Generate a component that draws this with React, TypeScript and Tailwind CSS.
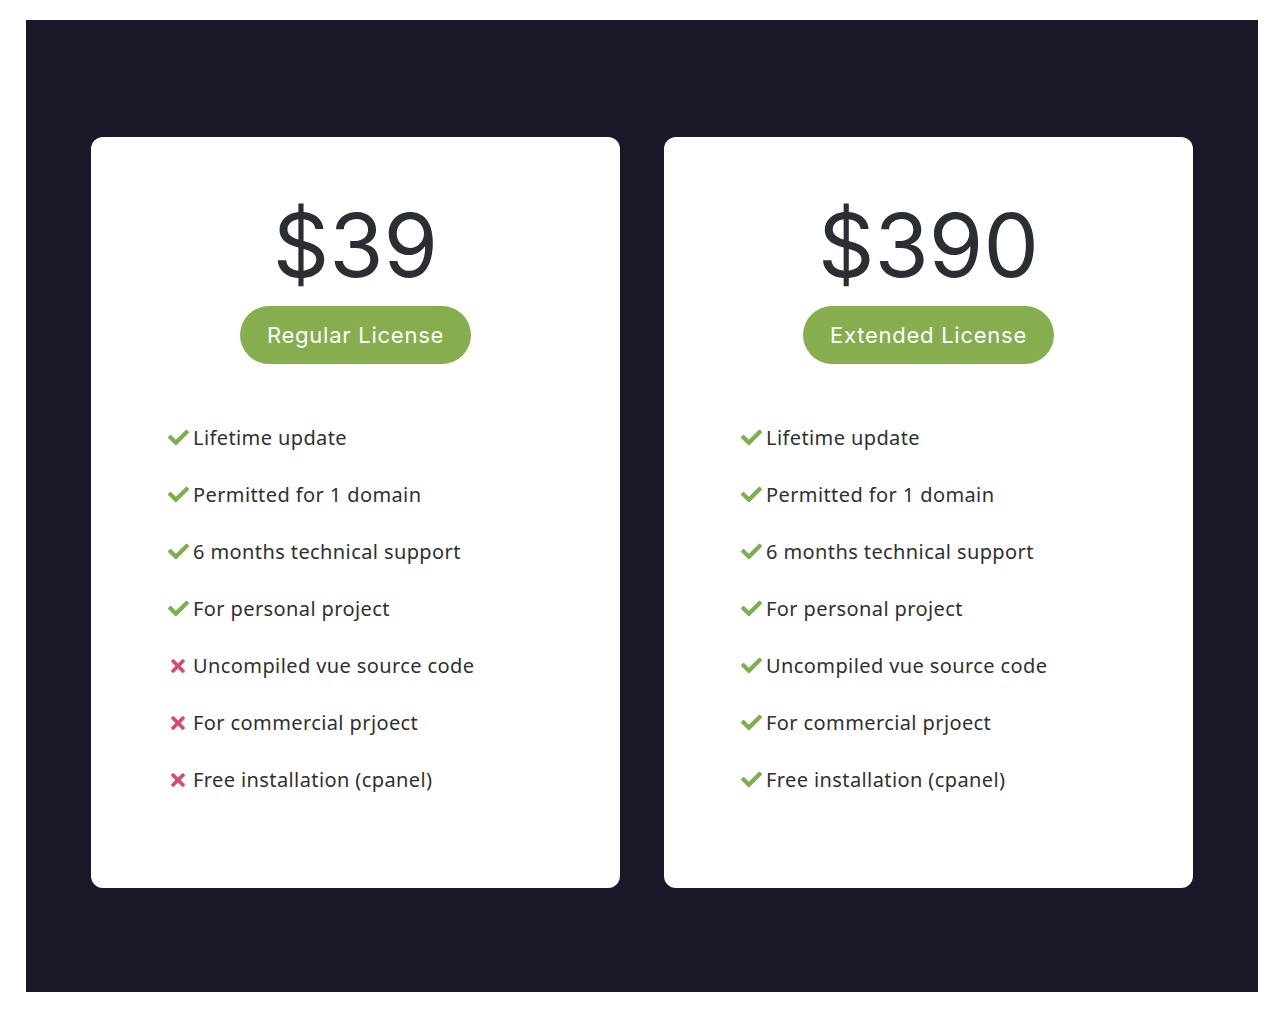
import { FaCheck, FaTimes } from 'react-icons/fa';

type Feature = { label: string; ok: boolean };

const labels = [
  'Lifetime update',
  'Permitted for 1 domain',
  '6 months technical support',
  'For personal project',
  'Uncompiled vue source code',
  'For commercial prjoect',
  'Free installation (cpanel)',
];

const plans: { price: string; name: string; features: Feature[] }[] = [
  {
    price: '$39',
    name: 'Regular License',
    features: labels.map((label, i) => ({ label, ok: i < 4 })),
  },
  {
    price: '$390',
    name: 'Extended License',
    features: labels.map((label) => ({ label, ok: true })),
  },
];

export default function App() {
  return (
    <div className="min-h-screen bg-white pt-[20px] pl-[26px]">
      <div className="w-[1232px] h-[972px] bg-[#181828] px-[65px] pt-[117px]">
        <div className="grid grid-cols-2 gap-[44px]">
          {plans.map((plan) => (
            <div
              key={plan.name}
              className="bg-white rounded-[12px] h-[751px] flex flex-col items-center pt-[68px]"
            >
              {/* PRICE */}
              <div className="h-[80px] flex items-center text-[88px] leading-none text-[#2b2e33] font-['Inter',sans-serif]">
                {plan.price}
              </div>

              {/* BADGE */}
              <div className="mt-[21px] h-[58px] px-[27px] rounded-full bg-[#86ae4e] text-white text-[22px] tracking-[0.75px] font-['Inter',sans-serif] flex items-center">
                {plan.name}
              </div>

              {/* FEATURES */}
              <ul className="self-stretch pl-[76px] mt-[45px] font-['Noto_Sans',sans-serif] text-[20px] tracking-[0.4px] text-[#2d3035]">
                {plan.features.map((f) => (
                  <li key={f.label} className="h-[57px] flex items-center">
                    <span className="w-[22px] flex justify-center">
                      {f.ok ? (
                        <FaCheck className="text-[#7fae4c] w-[21px] h-[21px]" />
                      ) : (
                        <FaTimes className="text-[#db4a6c] w-[14px] h-[20px]" />
                      )}
                    </span>
                    <span className="ml-[4px]">{f.label}</span>
                  </li>
                ))}
              </ul>
            </div>
          ))}
        </div>
      </div>
    </div>
  );
}
